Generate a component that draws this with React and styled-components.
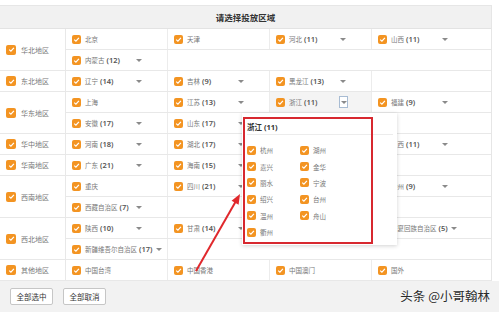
import React from 'react';
import styled, { createGlobalStyle } from 'styled-components';

const GlobalStyle = createGlobalStyle`
  * { box-sizing: border-box; }
  html, body { margin: 0; padding: 0; background: #fff; }
  body { font-family: "Noto Sans", "Noto Sans CJK SC", sans-serif; }
`;

const Page = styled.div`
  position: relative;
  width: 499px;
  height: 312px;
  overflow: hidden;
  padding-top: 5px;
`;

const Table = styled.div`
  width: 492px;
  border-right: 1px solid #e6e6e6;
`;

const Header = styled.div`
  height: 24px;
  background: #f1f1f1;
  border-top: 1px solid #e6e6e6;
  border-bottom: 1px solid #e3e3e3;
  display: flex;
  align-items: center;
  justify-content: center;
  font-family: "Noto Sans CJK SC", sans-serif;
  font-size: 8.5px;
  font-weight: 700;
  color: #333;
`;

const Region = styled.div`
  display: flex;
  border-bottom: 1px solid #e8e8e8;
`;

const RegionLabel = styled.div`
  width: 66px;
  flex: none;
  display: flex;
  align-items: center;
  gap: 5px;
  padding-left: 6px;
  border-right: 1px solid #e8e8e8;
  font-family: "Noto Sans CJK SC", sans-serif;
  font-size: 7px;
  color: #777;
`;

const SubRows = styled.div`
  flex: 1;
  display: flex;
  flex-direction: column;
`;

const SubRow = styled.div`
  box-sizing: content-box;
  height: 20px;
  display: grid;
  grid-template-columns: 102px 102px 102px 1fr;
  & + & {
    border-top: 1px solid #e8e8e8;
  }
`;

const Cell = styled.div`
  display: flex;
  align-items: center;
  padding-left: 6px;
  border-right: ${(p) => (p.$last ? 'none' : '1px solid #ececec')};
  background: ${(p) => (p.$active ? '#f4f4f4' : 'transparent')};
  white-space: nowrap;
`;

const Check = styled.span`
  width: ${(p) => p.$size || 9}px;
  height: ${(p) => p.$size || 9}px;
  flex: none;
  border-radius: 2px;
  background: #f39422;
  display: inline-flex;
  align-items: center;
  justify-content: center;
`;

const Label = styled.span`
  min-width: 47px;
  margin-left: 4px;
  font-size: 6.5px;
  color: #777;
  line-height: 10px;
`;

const Name = styled.span`
  font-family: "Noto Sans CJK SC", sans-serif;
`;

const Count = styled.span`
  font-family: "Noto Sans", sans-serif;
  font-size: 7.5px;
  font-weight: 600;
  color: #555;
  margin-left: 2px;
`;

const Caret = styled.span`
  width: 0;
  height: 0;
  border-left: 3px solid transparent;
  border-right: 3px solid transparent;
  border-top: 3.5px solid #8a8a8a;
`;

const CaretSlot = styled.span`
  width: 9px;
  height: 12px;
  display: inline-flex;
  align-items: center;
  justify-content: center;
  border: 1px solid ${(p) => (p.$boxed ? '#a8bcd3' : 'transparent')};
  background: ${(p) => (p.$boxed ? '#fff' : 'transparent')};
  margin-left: ${(p) => (p.$boxed ? '3px' : '2px')};
`;

const Popup = styled.div`
  position: absolute;
  left: 242px;
  top: 113px;
  width: 155px;
  height: 132px;
  background: #fff;
  box-shadow: 0 1px 4px rgba(0, 0, 0, 0.18);
  padding: 0 4px 0 5px;
`;

const PopupTitle = styled.div`
  padding-top: 8px;
  height: 22px;
  line-height: 12px;
  border-bottom: 1px solid #ececec;
  font-size: 7.5px;
  font-weight: 700;
  color: #333;
  white-space: nowrap;
`;

const PopupGrid = styled.div`
  margin-top: 7px;
  display: grid;
  grid-template-columns: 53px 53px;
  grid-template-rows: repeat(6, 16.4px);
  grid-auto-flow: column;
`;

const PopupItem = styled.div`
  display: flex;
  align-items: center;
  gap: 4px;
  font-family: "Noto Sans CJK SC", sans-serif;
  font-size: 6.5px;
  color: #777;
`;

const RedBox = styled.div`
  position: absolute;
  left: 243px;
  top: 117px;
  width: 130px;
  height: 127px;
  border: 2px solid #d7282f;
  pointer-events: none;
`;

const Overlay = styled.svg`
  position: absolute;
  left: 0;
  top: 0;
  pointer-events: none;
`;

const Footer = styled.div`
  height: 31px;
  display: flex;
  align-items: center;
  gap: 10px;
  padding: 0 9px 0 10px;
  background: #f2f2f2;
`;

const Button = styled.button`
  height: 17px;
  width: 43px;
  padding: 0;
  background: #fff;
  border: 1px solid #c6c6c6;
  border-radius: 2px;
  font-family: "Noto Sans CJK SC", sans-serif;
  font-size: 7.5px;
  color: #333;
`;

const Watermark = styled.span`
  margin-left: auto;
  margin-top: -3px;
  font-family: "Noto Sans CJK SC", sans-serif;
  font-size: 12.5px;
  color: #2a2a2a;
  text-shadow: 0 0 2px #fff;
`;

function Tick() {
  return (
    <svg width="7" height="7" viewBox="0 0 7 7">
      <path d="M1.2 3.6 L2.9 5.1 L5.9 1.8" fill="none" stroke="#fff" strokeWidth="1.2" />
    </svg>
  );
}

const c = (name, count, opts = {}) => ({ name, count, ...opts });
// cells fully covered by the open dropdown
const covered = { covered: true };

const regions = [
  { name: '华北地区', rows: [[c('北京'), c('天津'), c('河北', 11), c('山西', 11)], [c('内蒙古', 12)]] },
  { name: '东北地区', rows: [[c('辽宁', 14), c('吉林', 9), c('黑龙江', 13)]] },
  { name: '华东地区', rows: [[c('上海'), c('江苏', 13), c('浙江', 11, { active: true }), c('福建', 9)], [c('安徽', 17), c('山东', 17)]] },
  { name: '华中地区', rows: [[c('河南', 18), c('湖北', 17), c('湖南', 14, covered), c('江西', 11)]] },
  { name: '华南地区', rows: [[c('广东', 21), c('海南', 15), c('广西', 14, covered)]] },
  { name: '西南地区', rows: [[c('重庆'), c('四川', 21), c('云南', 16, covered), c('贵州', 9)], [c('西藏自治区', 7)]] },
  { name: '西北地区', rows: [[c('陕西', 10), c('甘肃', 14), c('青海', 8, covered), c('宁夏回族自治区', 5)], [c('新疆维吾尔自治区', 17)]] },
  { name: '其他地区', rows: [[c('中国台湾'), c('中国香港'), c('中国澳门'), c('国外')]] },
];

const cities = ['杭州', '嘉兴', '丽水', '绍兴', '温州', '衢州', '湖州', '金华', '宁波', '台州', '舟山'];

function ProvinceCell({ item, last }) {
  if (item.covered) return <Cell $last={last} />;
  return (
    <Cell $active={item.active} $last={last}>
      <Check><Tick /></Check>
      <Label>
        <Name>{item.name}</Name>
        {item.count != null && <Count>({item.count})</Count>}
      </Label>
      {item.count != null && (
        <CaretSlot $boxed={item.active}><Caret /></CaretSlot>
      )}
    </Cell>
  );
}

export default function App() {
  return (
    <>
      <GlobalStyle />
      <Page>
        <Table>
          <Header>请选择投放区域</Header>
          {regions.map((region) => (
            <Region key={region.name}>
              <RegionLabel>
                <Check $size={10}><Tick /></Check>
                {region.name}
              </RegionLabel>
              <SubRows>
                {region.rows.map((row, i) => (
                  <SubRow key={i}>
                    {row.map((item, j) => (
                      <ProvinceCell key={item.name} item={item} last={j === 3} />
                    ))}
                  </SubRow>
                ))}
              </SubRows>
            </Region>
          ))}
        </Table>
        <Footer>
          <Button>全部选中</Button>
          <Button>全部取消</Button>
          <Watermark>头条 @小哥翰林</Watermark>
        </Footer>

        <Popup>
          <PopupTitle>
            <Name>浙江</Name> (11)
          </PopupTitle>
          <PopupGrid>
            {cities.map((city) => (
              <PopupItem key={city}>
                <Check><Tick /></Check>
                {city}
              </PopupItem>
            ))}
          </PopupGrid>
        </Popup>
        <RedBox />
        <Overlay width="499" height="312" viewBox="0 0 499 312">
          <line x1="196" y1="271" x2="236" y2="201" stroke="#e0282c" strokeWidth="2" />
          <polygon points="240,194 238.6,204.7 231.6,200.7" fill="#e0282c" />
        </Overlay>
      </Page>
    </>
  );
}
